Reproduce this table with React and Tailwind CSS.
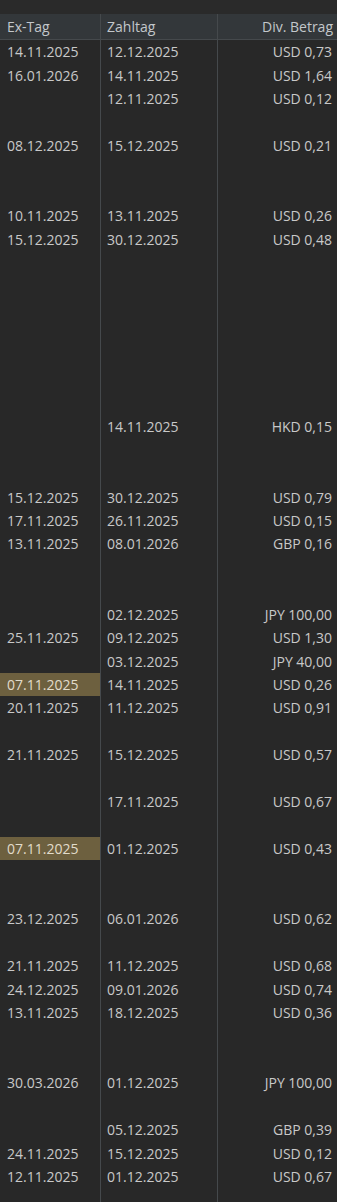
const ROWS = [
  ['14.11.2025', '12.12.2025', 'USD 0,73'],
  ['16.01.2026', '14.11.2025', 'USD 1,64'],
  ['', '12.11.2025', 'USD 0,12'],
  null,
  ['08.12.2025', '15.12.2025', 'USD 0,21'],
  null,
  null,
  ['10.11.2025', '13.11.2025', 'USD 0,26'],
  ['15.12.2025', '30.12.2025', 'USD 0,48'],
  null, null, null, null, null, null, null,
  ['', '14.11.2025', 'HKD 0,15'],
  null,
  null,
  ['15.12.2025', '30.12.2025', 'USD 0,79'],
  ['17.11.2025', '26.11.2025', 'USD 0,15'],
  ['13.11.2025', '08.01.2026', 'GBP 0,16'],
  null,
  null,
  ['', '02.12.2025', 'JPY 100,00'],
  ['25.11.2025', '09.12.2025', 'USD 1,30'],
  ['', '03.12.2025', 'JPY 40,00'],
  ['07.11.2025', '14.11.2025', 'USD 0,26', true],
  ['20.11.2025', '11.12.2025', 'USD 0,91'],
  null,
  ['21.11.2025', '15.12.2025', 'USD 0,57'],
  null,
  ['', '17.11.2025', 'USD 0,67'],
  null,
  ['07.11.2025', '01.12.2025', 'USD 0,43', true],
  null,
  null,
  ['23.12.2025', '06.01.2026', 'USD 0,62'],
  null,
  ['21.11.2025', '11.12.2025', 'USD 0,68'],
  ['24.12.2025', '09.01.2026', 'USD 0,74'],
  ['13.11.2025', '18.12.2025', 'USD 0,36'],
  null,
  null,
  ['30.03.2026', '01.12.2025', 'JPY 100,00'],
  null,
  ['', '05.12.2025', 'GBP 0,39'],
  ['24.11.2025', '15.12.2025', 'USD 0,12'],
  ['12.11.2025', '01.12.2025', 'USD 0,67'],
  null,
];

function Row({ row }) {
  const [ex, pay, amount, marked] = row || ['', '', '', false];
  return (
    <div className="flex h-[23.44px] items-center">
      <div
        className={`flex h-full w-[101px] shrink-0 items-center border-r border-[#45494c] pl-[7px] ${
          marked ? 'bg-[#6d603f] text-[#e2dccb]' : ''
        }`}
      >
        {ex}
      </div>
      <div className="flex h-full w-[117px] shrink-0 items-center border-r border-[#45494c] pl-[6px]">
        {pay}
      </div>
      <div className="flex h-full flex-1 items-center justify-end pr-[5px]">{amount}</div>
    </div>
  );
}

export default function App() {
  return (
    <div
      className="h-[1202px] w-[337px] overflow-hidden bg-[#282828] text-[14px] text-[#c9c9c9]"
      style={{ fontFamily: '"Open Sans", "Noto Sans", sans-serif' }}
    >
      {/* Top strip */}
      <div className="h-[14px] bg-[#2a2a2a]" />

      {/* Header */}
      <div className="flex h-[26px] border-b border-[#45494c] bg-[#33373a] text-[#c3c7cb]">
        <div className="flex w-[101px] shrink-0 items-center border-r border-[#45494c] pl-[7px]">Ex-Tag</div>
        <div className="flex w-[117px] shrink-0 items-center border-r border-[#45494c] pl-[6px]">Zahltag</div>
        <div className="flex flex-1 items-center justify-end pr-[4px]">Div. Betrag</div>
      </div>

      {/* Body */}
      <div className="flex flex-col">
        {ROWS.map((row, i) => (
          <Row key={i} row={row} />
        ))}
      </div>
    </div>
  );
}
